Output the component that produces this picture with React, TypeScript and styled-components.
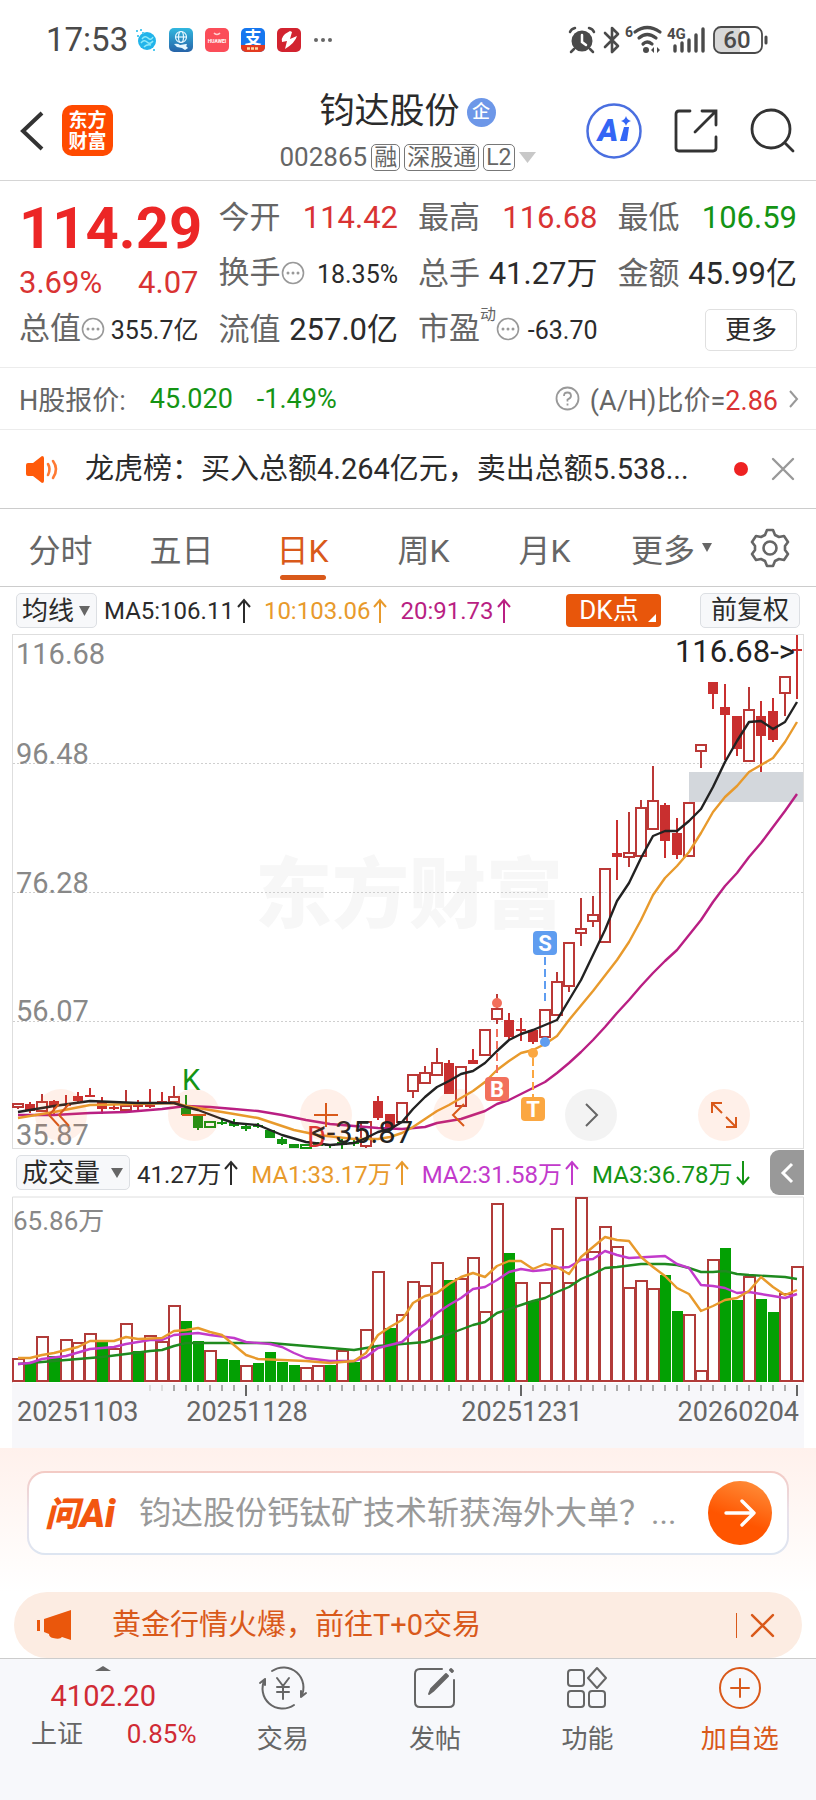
import React from "react";
import styled, { createGlobalStyle } from "styled-components";

const RED = "#d93333";
const GREEN = "#149414";
const ORANGE = "#d9591a";
const AMBER = "#e89a2c";
const MAGENTA = "#b91f83";
const PURPLE = "#c23acb";
const GREY = "#666666";
const INK = "#2b2b2b";
const FONT = `Roboto, "Noto Sans CJK SC", sans-serif`;

const GlobalStyle = createGlobalStyle`
  *, *::before, *::after { box-sizing: border-box; }
  body { margin: 0; background: #fff; color: ${INK}; font-family: ${FONT}; }
  button, input, select { font: inherit; color: inherit; }
  button { padding: 0; border: 0; background: none; cursor: pointer; }
  svg { display: block; flex: none; overflow: visible; }
  dl, dd, h1, p { margin: 0; }
  a { color: inherit; text-decoration: none; }
`;

const Page = styled.div`
  min-height: 100vh;
  display: flex;
  flex-direction: column;
  white-space: nowrap;
`;

/* ---------- status bar ---------- */

const StatusBar = styled.div`
  height: 80px;
  padding: 0 48px 0 46px;
  display: flex;
  align-items: center;
  justify-content: space-between;
  color: #4a4a4a;
`;

const StatusGroup = styled.div<{ $gap: number }>`
  display: flex;
  align-items: center;
  gap: ${(p) => p.$gap}px;
`;

const Clock = styled.time`
  font-size: 33px;
  line-height: 40px;
  margin-right: -5px;
`;

/* ---------- header ---------- */

const Header = styled.header`
  display: grid;
  grid-template-columns: 1fr auto 1fr;
  align-items: center;
  padding: 10px 21px 9px 20px;
  border-bottom: 1px solid #d5d5d5;
`;

const HeaderSide = styled.div<{ $end?: boolean }>`
  display: flex;
  align-items: center;
  gap: ${(p) => (p.$end ? 32 : 17)}px;
  justify-content: ${(p) => (p.$end ? "flex-end" : "flex-start")};
`;

const Logo = styled.a`
  width: 51px;
  height: 51px;
  border-radius: 10px;
  background: #ff4a00;
  color: #fff;
  font-size: 19px;
  line-height: 21px;
  font-weight: 700;
  display: grid;
  place-content: center;
  text-align: center;
  white-space: pre-line;
`;

const TitleBlock = styled.div`
  display: flex;
  flex-direction: column;
  align-items: center;
  gap: 10px;
`;

const TitleRow = styled.div`
  display: flex;
  align-items: center;
  gap: 7px;
  h1 { font-size: 35px; line-height: 44px; font-weight: 400; }
`;

const CompanyBadge = styled.span`
  width: 29px;
  height: 29px;
  border-radius: 50%;
  background: #6d97e8;
  color: #fff;
  font-size: 18px;
  line-height: 28px;
  font-weight: 500;
  text-align: center;
`;

const CodeRow = styled.div`
  display: flex;
  align-items: center;
  gap: 4px;
  color: ${GREY};
  font-size: 26px;
  line-height: 27px;
`;

const Tag = styled.span`
  border: 1px solid #777;
  border-radius: 5px;
  padding: 0 2px;
  font-size: 23px;
  line-height: 25px;
`;

/* ---------- quote panel ---------- */

const Quote = styled.section`
  display: grid;
  grid-template-columns: repeat(4, minmax(0, 1fr));
  grid-template-rows: repeat(3, 56px);
  column-gap: 20px;
  padding: 9px 19px;
  border-bottom: 1px solid #ececec;
`;

const PriceBlock = styled.div`
  grid-row: span 2;
  padding-top: 2px;
  color: ${RED};
`;

const Price = styled.div`
  color: #ec2626;
  font-size: 58px;
  line-height: 72px;
  font-weight: 700;
`;

const Change = styled.div`
  display: flex;
  justify-content: space-between;
  font-size: 31px;
  line-height: 38px;
`;

const Stat = styled.dl`
  align-self: center;
  display: flex;
  align-items: baseline;
  justify-content: space-between;
  line-height: 44px;
  dt {
    display: flex;
    align-items: center;
    font-size: 31px;
    color: ${GREY};
  }
`;

const StatValue = styled.dd<{ $color?: string; $small?: boolean }>`
  font-size: ${(p) => (p.$small ? 25 : 31)}px;
  color: ${(p) => p.$color || INK};
`;

const Dynamic = styled.sup`
  align-self: flex-start;
  font-size: 16px;
  line-height: 16px;
`;

const MoreButton = styled.button`
  justify-self: end;
  align-self: center;
  width: 92px;
  height: 42px;
  border: 1px solid #e0e0e0;
  border-radius: 5px;
  font-size: 26px;
  line-height: 38px;
`;

/* ---------- H share and notice rows ---------- */

const HShare = styled.section`
  height: 62px;
  padding: 0 17px 0 19px;
  display: flex;
  align-items: center;
  font-size: 27px;
  color: ${GREY};
  border-bottom: 1px solid #ececec;
`;

const HValue = styled.span`
  color: ${GREEN};
  margin-left: 24px;
`;

const RatioLink = styled.a`
  margin-left: auto;
  display: flex;
  align-items: center;
  gap: 10px;
  b { font-weight: 400; color: ${RED}; }
`;

const Notice = styled.section`
  height: 79px;
  padding: 0 21px 0 26px;
  display: flex;
  align-items: center;
  border-bottom: 1px solid #ccc;
`;

const NoticeText = styled.p`
  flex: 1;
  min-width: 0;
  margin-left: 26px;
  overflow: hidden;
  text-overflow: ellipsis;
  font-size: 29px;
  line-height: 40px;
`;

const UnreadDot = styled.span`
  width: 14px;
  height: 14px;
  margin: 0 23px 0 20px;
  border-radius: 50%;
  background: #ee2222;
`;

/* ---------- period tabs ---------- */

const Tabs = styled.nav`
  height: 78px;
  padding-right: 14px;
  display: grid;
  grid-template-columns: repeat(5, 121fr) 133fr 64fr;
  border-bottom: 1px solid #ccc;
`;

const Tab = styled.button<{ $active?: boolean }>`
  position: relative;
  display: flex;
  align-items: center;
  justify-content: center;
  gap: 7px;
  font-size: 32px;
  color: ${(p) => (p.$active ? ORANGE : GREY)};
  &::after {
    content: "";
    display: ${(p) => (p.$active ? "block" : "none")};
    position: absolute;
    left: 50%;
    bottom: 6px;
    width: 46px;
    height: 5px;
    margin-left: -23px;
    border-radius: 3px;
    background: ${ORANGE};
  }
`;

/* ---------- indicator rows ---------- */

const IndicatorRow = styled.div<{ $padRight: number }>`
  height: 47px;
  padding: 0 ${(p) => p.$padRight}px 0 16px;
  display: flex;
  align-items: center;
  gap: 10px;
  font-size: 24px;
`;

const Picker = styled.label<{ $gap: number }>`
  height: 35px;
  margin-right: -3px;
  padding: 0 6px 0 5px;
  display: flex;
  align-items: center;
  gap: ${(p) => p.$gap}px;
  border: 1px solid #dcdfe3;
  border-radius: 5px;
  background: #f7f8fa;
  select {
    appearance: none;
    border: 0;
    padding: 0;
    background: none;
    font-size: 26px;
    line-height: 32px;
  }
  svg { pointer-events: none; }
`;

const Reading = styled.span<{ $color?: string }>`
  display: flex;
  align-items: center;
  color: ${(p) => p.$color || INK};
`;

const DkButton = styled.button`
  position: relative;
  width: 95px;
  height: 33px;
  margin-left: auto;
  padding-right: 9px;
  border-radius: 4px;
  background: #e8560b;
  color: #fff;
  font-size: 26px;
  line-height: 31px;
  &::after {
    content: "";
    position: absolute;
    right: 5px;
    bottom: 5px;
    border: 4px solid transparent;
    border-right-color: #fff;
    border-bottom-color: #fff;
  }
`;

const AdjustButton = styled.button`
  width: 100px;
  height: 35px;
  margin-left: 29px;
  border: 1px solid #dcdfe3;
  border-radius: 5px;
  background: #f7f8fa;
  font-size: 26px;
  line-height: 31px;
`;

const CollapseButton = styled.button`
  width: 34px;
  height: 45px;
  margin-left: auto;
  border-radius: 9px 0 0 9px;
  background: #999;
  display: grid;
  place-items: center;
`;

/* ---------- charts ---------- */

const ChartArea = styled.div`
  position: relative;
  margin: 0 12px;
  svg { font-family: ${FONT}; }
`;

const ChartSvg = styled.svg`
  width: 100%;
  height: auto;
`;

const ChartTools = styled.div`
  position: absolute;
  left: 23px;
  right: 54px;
  bottom: 8px;
  display: flex;
  justify-content: space-between;
`;

const ChartTool = styled.button<{ $muted?: boolean }>`
  width: 52px;
  height: 52px;
  border-radius: 50%;
  background: ${(p) => (p.$muted ? "rgba(120,120,120,.09)" : "rgba(255,110,40,.1)")};
  color: ${(p) => (p.$muted ? GREY : ORANGE)};
  display: grid;
  place-items: center;
`;

/* ---------- ask and promo ---------- */

const AskSection = styled.section`
  padding: 23px 27px 37px;
  background: linear-gradient(#fff1ec, #fff);
`;

const AskBox = styled.form`
  height: 84px;
  padding: 0 15px 0 16px;
  display: flex;
  align-items: center;
  border: 2px solid transparent;
  border-radius: 18px;
  background: linear-gradient(#fff, #fff) padding-box, linear-gradient(#f3cac4, #e9e1ea 50%, #dde5f1) border-box;
`;

const AskInput = styled.input`
  flex: 1;
  min-width: 0;
  margin: 0 14px 0 18px;
  padding: 0;
  border: 0;
  outline: 0;
  background: none;
  font-size: 32px;
  line-height: 44px;
  text-overflow: ellipsis;
  &::placeholder { color: #999; opacity: 1; }
`;

const SendButton = styled.button`
  width: 64px;
  height: 64px;
  border-radius: 50%;
  background: linear-gradient(200deg, #ff9440, #ff5500 60%);
  display: grid;
  place-items: center;
`;

const Promo = styled.section`
  height: 66px;
  margin: 0 14px;
  padding: 0 27px 0 22px;
  display: flex;
  align-items: center;
  border-radius: 33px;
  background: #fcece2;
  color: ${ORANGE};
  a { flex: 1; margin-left: 40px; font-size: 29px; line-height: 40px; }
  button { padding-left: 13px; border-left: 1px solid ${ORANGE}; }
`;

/* ---------- bottom bar ---------- */

const BottomBar = styled.nav`
  flex: 1;
  display: grid;
  grid-template-columns: 206fr repeat(4, 152fr);
  align-items: start;
  padding: 7px 0 36px;
  border-top: 1px solid #ccc;
  background: #f7f8fb;
`;

const IndexLink = styled.a`
  display: flex;
  flex-direction: column;
  align-items: center;
  color: #d02b35;
  font-size: 29px;
  line-height: 38px;
  svg { margin-bottom: 6px; }
`;

const IndexRow = styled.span`
  align-self: stretch;
  display: flex;
  justify-content: space-between;
  padding: 0 10px 0 31px;
  font-size: 26px;
  span { color: ${GREY}; }
`;

const BarButton = styled.button<{ $accent?: boolean }>`
  display: flex;
  flex-direction: column;
  align-items: center;
  gap: 10px;
  color: ${(p) => (p.$accent ? ORANGE : GREY)};
  font-size: 26px;
  line-height: 38px;
`;

/* ---------- data ---------- */

type Kind = "up" | "down" | "fall" | "fallHollow";
/* [kind, high, top, bottom, low] in chart units */
const CANDLES: [Kind, number, number, number, number][] = [
  ["up", 469, 470, 473, 475], ["down", 468, 470, 477, 479], ["up", 460, 468, 477, 477], ["down", 466, 467, 472, 480],
  ["down", 461, 470, 472, 473], ["down", 458, 462, 467, 468], ["down", 454, 461, 463, 463], ["down", 463, 467, 475, 480],
  ["down", 471, 473, 475, 476], ["up", 456, 472, 476, 476], ["down", 466, 471, 473, 478], ["down", 455, 471, 473, 474],
  ["down", 458, 467, 469, 469], ["up", 452, 463, 468, 468], ["fall", 461, 474, 481, 482], ["fall", 481, 481, 494, 496],
  ["fallHollow", 487, 488, 493, 494], ["fall", 484, 488, 490, 491], ["fall", 485, 489, 492, 493], ["fall", 491, 492, 495, 497],
  ["fall", 489, 491, 493, 494], ["fall", 496, 496, 504, 504], ["fall", 503, 505, 510, 511], ["fall", 510, 510, 514, 514],
  ["fallHollow", 510, 511, 514, 515], ["fall", 508, 510, 512, 512], ["fall", 510, 510, 512, 514], ["fall", 505, 508, 511, 515],
  ["fall", 506, 508, 510, 512], ["up", 487, 488, 512, 514], ["down", 462, 467, 484, 486], ["down", 480, 480, 494, 494],
  ["up", 468, 469, 488, 488], ["up", 440, 441, 457, 464], ["up", 432, 439, 449, 449], ["up", 414, 429, 441, 442],
  ["down", 426, 429, 460, 460], ["up", 432, 433, 472, 472], ["down", 415, 426, 430, 430], ["up", 395, 396, 421, 421],
  ["up", 360, 375, 385, 390], ["down", 379, 386, 403, 405], ["down", 384, 395, 397, 407], ["down", 396, 396, 408, 410],
  ["up", 375, 376, 403, 404], ["up", 338, 348, 381, 381], ["up", 308, 309, 352, 358], ["up", 264, 295, 299, 312],
  ["up", 262, 281, 287, 293], ["up", 234, 235, 308, 308], ["down", 186, 219, 223, 246], ["up", 178, 219, 223, 233],
  ["up", 166, 174, 222, 222], ["up", 132, 167, 195, 196], ["down", 169, 171, 207, 224], ["down", 184, 199, 221, 225],
  ["up", 168, 169, 222, 222], ["up", 110, 111, 117, 134], ["down", 48, 48, 60, 75], ["down", 50, 73, 81, 126],
  ["down", 82, 82, 115, 122], ["up", 53, 76, 127, 128], ["down", 67, 82, 102, 138], ["down", 64, 77, 106, 108],
  ["up", 42, 43, 59, 82], ["down", 1, 15, 17, 65],
];

/* tops of the volume bars, negative for a falling day */
const VOLUMES = [
  162, -167, 140, -160, 143, 146, 137, -145, 152, 127, -155, 139, 145, 109, -125, -145, 154, -163, -164, 169, -167, -156,
  -166, -169, 171, 169, -169, 154, -166, 133, 75, -132, 118, 85, 89, 66, -84, 82, 61, 115, 7, -57, 86, -105, 86, 32, 86,
  1, 55, 30, 50, 91, 84, 92, -79, -115, 118, 174, 63, -52, -104, 80, -103, -116, 97, 70,
];

type Line = [number, number][];
const MA5: Line = [[0, 478], [3, 472], [6, 467], [10, 469], [13, 469], [14, 473], [15, 476], [17, 485], [18, 489], [20, 491], [22, 501], [24, 508], [26, 511], [28, 509], [29, 504], [30, 498], [31, 495], [32, 488], [33, 475], [34, 463], [35, 453], [36, 447], [37, 440], [38, 437], [39, 429], [40, 417], [41, 406], [42, 400], [43, 396], [44, 391], [45, 386], [46, 366], [47, 346], [48, 321], [49, 296], [50, 267], [51, 249], [52, 224], [53, 202], [54, 197], [55, 197], [56, 187], [57, 175], [58, 153], [59, 128], [60, 107], [61, 88], [62, 87], [63, 95], [64, 88], [65, 68]];
const MA10: Line = [[0, 484], [3, 478], [6, 471], [10, 470], [13, 469], [14, 472], [16, 476], [18, 480], [20, 484], [23, 496], [25, 501], [28, 505], [30, 505], [31, 503], [32, 499], [33, 493], [35, 477], [36, 471], [37, 464], [38, 457], [39, 448], [40, 436], [41, 427], [42, 419], [43, 416], [44, 410], [45, 402], [46, 386], [48, 357], [50, 326], [51, 308], [52, 286], [53, 261], [54, 244], [55, 232], [56, 218], [57, 199], [58, 178], [59, 163], [60, 152], [61, 138], [62, 131], [63, 124], [64, 108], [65, 88]];
const MA20: Line = [[0, 481], [3, 481], [6, 479], [9, 478], [12, 475], [14, 472], [16, 473], [18, 475], [20, 477], [22, 481], [24, 486], [26, 490], [28, 492], [30, 494], [32, 495], [34, 493], [35, 489], [37, 485], [39, 477], [40, 470], [41, 466], [43, 454], [44, 448], [45, 439], [46, 429], [47, 418], [48, 406], [49, 393], [50, 379], [51, 366], [52, 352], [53, 339], [54, 327], [55, 316], [56, 301], [57, 286], [58, 268], [59, 252], [60, 239], [61, 223], [62, 209], [63, 193], [64, 177], [65, 160]];
const VMA1: Line = [[0, 162], [1, 162], [2, 159], [3, 157], [4, 154], [5, 151], [6, 145], [8, 145], [9, 141], [10, 143], [12, 142], [13, 135], [14, 134], [15, 132], [16, 136], [17, 139], [18, 149], [19, 159], [20, 163], [22, 164], [24, 165], [26, 167], [28, 165], [29, 157], [30, 139], [31, 131], [32, 124], [33, 107], [34, 100], [35, 97], [36, 88], [37, 81], [38, 77], [39, 81], [40, 70], [41, 65], [42, 65], [43, 73], [44, 68], [45, 71], [46, 78], [47, 61], [48, 51], [49, 41], [50, 44], [51, 45], [52, 61], [53, 71], [54, 80], [55, 92], [56, 98], [57, 115], [58, 110], [59, 104], [60, 102], [61, 95], [62, 81], [63, 91], [64, 99], [65, 94]];
const VMA2: Line = [[0, 168], [1, 167], [2, 163], [4, 160], [6, 153], [8, 151], [9, 148], [11, 144], [12, 144], [13, 139], [15, 137], [16, 139], [18, 142], [19, 146], [21, 148], [22, 151], [23, 157], [24, 162], [26, 165], [28, 165], [29, 161], [30, 152], [32, 146], [33, 136], [34, 128], [35, 117], [36, 109], [37, 102], [38, 93], [39, 91], [40, 84], [41, 76], [42, 73], [43, 75], [44, 74], [45, 72], [46, 71], [47, 64], [48, 63], [49, 55], [50, 59], [51, 62], [54, 60], [55, 68], [56, 72], [57, 89], [58, 90], [59, 92], [60, 97], [61, 96], [62, 98], [63, 100], [64, 102], [65, 98]];
const VMA3: Line = [[0, 168], [3, 165], [5, 163], [7, 161], [9, 158], [11, 155], [12, 154], [13, 150], [14, 147], [18, 147], [21, 147], [23, 149], [26, 152], [28, 154], [30, 150], [32, 148], [34, 146], [36, 138], [38, 129], [39, 126], [40, 117], [42, 109], [43, 105], [44, 102], [45, 96], [46, 91], [47, 83], [48, 78], [49, 72], [50, 71], [52, 68], [54, 68], [55, 69], [56, 72], [57, 76], [58, 76], [59, 75], [60, 78], [61, 79], [64, 81], [65, 83]];

const cx = (i: number) => 6 + i * 12 - (i > 32 ? 1 : 0);
const points = (line: Line) => line.map(([i, y]) => `${cx(i)},${y}`).join(" ");

const AXIS: [string, number][] = [["116.68", 30], ["96.48", 130], ["76.28", 259], ["56.07", 387], ["35.87", 511]];
const SIGNALS = [
  { name: "B", day: 40, y: 443, color: "#f2705c", dot: 369, from: 395, to: 443 },
  { name: "T", day: 43, y: 463, color: "#fba741", dot: 419, from: 424, to: 463 },
  { name: "S", day: 44, y: 297, color: "#5f9df0", dot: 408, from: 323, to: 368 },
];

function Candle({ day, data }: { day: number; data: (typeof CANDLES)[number] }) {
  const [kind, high, top, bottom, low] = data;
  const x = cx(day);
  const falling = kind === "fall" || kind === "fallHollow";
  const hollow = kind === "up" || kind === "fallHollow";
  const color = falling ? "#129412" : hollow ? "#bb3836" : "#c92f2f";
  return (
    <g stroke={color} strokeWidth="2">
      <path d={`M${x} ${high}V${top}M${x} ${bottom}V${low}`} />
      {hollow ? (
        <rect x={x - 5} y={top} width="10" height={Math.max(bottom - top, 2)} fill="none" />
      ) : (
        <rect x={x - 5} y={top} width="10" height={bottom - top} fill={color} stroke="none" />
      )}
    </g>
  );
}

function PriceChart() {
  return (
    <ChartSvg viewBox="0 0 792 515" role="img" aria-label="日K线图">
      <text x="243" y="288" fontSize="77" fontWeight="900" fill="#f7f7f7">东方财富</text>
      <rect x="677" y="138" width="114" height="30" fill="#d3d7dc" />
      <g stroke="#cfcfcf" strokeDasharray="2 2">
        <path d="M1 129.5H791M1 258.5H791M1 387.5H791" />
      </g>
      <rect x="0.5" y="0.5" width="791" height="514" fill="none" stroke="#dedede" />
      <g fontSize="29" fill="#888">
        {AXIS.map(([label, y]) => <text key={label} x="4" y={y}>{label}</text>)}
      </g>
      {CANDLES.map((c, i) => <Candle key={i} day={i} data={c} />)}
      <g fill="none" strokeWidth="2.4" strokeLinejoin="round">
        <polyline points={points(MA20)} stroke={MAGENTA} />
        <polyline points={points(MA10)} stroke={AMBER} />
        <polyline points={points(MA5)} stroke="#222" />
      </g>
      <text x="170" y="456" fontSize="29" fill={GREEN}>K</text>
      <text x="295" y="513" fontSize="29" fill={RED}>D</text>
      <g fontSize="31" fill="#222">
        <text x="783" y="28" textAnchor="end">116.68-&gt;</text>
        <text x="299" y="509">&lt;-35.87</text>
      </g>
      {SIGNALS.map((s) => (
        <g key={s.name}>
          <path d={`M${cx(s.day)} ${s.from}V${s.to}`} stroke={s.color} strokeWidth="2" strokeDasharray="8 4" />
          <circle cx={cx(s.day)} cy={s.dot} r="5" fill={s.color} />
          <rect x={cx(s.day) - 12} y={s.y} width="24" height="24" rx="4" fill={s.color} />
          <text x={cx(s.day)} y={s.y + 20} fontSize="22" fontWeight="700" fill="#fff" textAnchor="middle">{s.name}</text>
        </g>
      ))}
    </ChartSvg>
  );
}

function VolumeChart() {
  return (
    <ChartSvg viewBox="0 0 792 187" role="img" aria-label="成交量图">
      <path d="M0.5 187V1H791.5V187" fill="none" stroke="#dedede" />
      <text x="1" y="34" fontSize="26" fill="#888">65.86万</text>
      {VOLUMES.map((v, i) =>
        v < 0 ? (
          <rect key={i} x={cx(i) - 5} y={-v} width="11" height={186 + v} fill="#03a003" />
        ) : (
          <rect key={i} x={cx(i) - 5} y={v + 1} width="11" height={184 - v} fill="#fff" stroke="#b13b39" strokeWidth="2" />
        )
      )}
      <g fill="none" strokeWidth="2.4" strokeLinejoin="round">
        <polyline points={points(VMA3)} stroke="#1f8a1f" />
        <polyline points={points(VMA2)} stroke={PURPLE} />
        <polyline points={points(VMA1)} stroke={AMBER} />
      </g>
    </ChartSvg>
  );
}

function DateAxis() {
  const days = Array.from({ length: 55 }, (_, k) => k + 11);
  const major = [19, 42, 65];
  return (
    <ChartSvg viewBox="0 0 792 65" role="img" aria-label="日期">
      <rect width="792" height="65" fill="#f7f7fa" />
      {days.map((d) => (
        <path
          key={d}
          d={`M${cx(d)} 2V${major.includes(d) ? 13 : 8}`}
          stroke={major.includes(d) ? "#666" : d < 13 ? "#ddd" : "#aaa"}
          strokeWidth="2"
        />
      ))}
      <g fontSize="27" fill={GREY}>
        <text x="5" y="38">20251103</text>
        <text x="235" y="38" textAnchor="middle">20251128</text>
        <text x="510" y="38" textAnchor="middle">20251231</text>
        <text x="787" y="38" textAnchor="end">20260204</text>
      </g>
    </ChartSvg>
  );
}

/* ---------- small drawings ---------- */

const Triangle = ({ w = 10, h = 10, color = GREY }: { w?: number; h?: number; color?: string }) => (
  <svg width={w} height={h} viewBox="0 0 10 10" preserveAspectRatio="none" aria-hidden="true">
    <path d="M0 0H10L5 10Z" fill={color} />
  </svg>
);

const Cross = ({ size, color }: { size: number; color: string }) => (
  <svg width={size} height={size} viewBox="0 0 24 24" stroke={color} strokeWidth="2.4" strokeLinecap="round" aria-hidden="true">
    <path d="M2 2L22 22M22 2L2 22" />
  </svg>
);

const Dots = () => (
  <svg width="24" height="24" viewBox="0 0 24 24" fill="none" stroke="#999" strokeWidth="1.6" aria-hidden="true">
    <circle cx="12" cy="12" r="10.5" />
    <g fill="#999" stroke="none">
      <circle cx="7" cy="12" r="1.5" /><circle cx="12" cy="12" r="1.5" /><circle cx="17" cy="12" r="1.5" />
    </g>
  </svg>
);

const Arrow = ({ down }: { down?: boolean }) => (
  <svg width="20" height="28" viewBox="0 0 20 28" fill="none" stroke="currentColor" strokeWidth="2" aria-hidden="true">
    <path d={down ? "M10 2V25M4 18L10 25L16 18" : "M10 26V3M4 10L10 3L16 10"} />
  </svg>
);

function AppIcons() {
  return (
    <>
      <svg width="22" height="24" viewBox="0 0 22 24" aria-hidden="true">
        <circle cx="12" cy="13" r="9" fill="#22b4ea" />
        <path d="M7 11q3-4 6-1t5-1M6 15q3-4 6-1t6-1M9 19q3-3 7-2" stroke="#8ee9fa" strokeWidth="1.5" fill="none" />
        <path d="M1 2h2v2H1zM5 1h2v2H5zM2 7h2v2H2zM7 4h2v2H7zM18 21h2v2h-2z" fill="#54caf0" />
      </svg>
      <svg width="24" height="24" viewBox="0 0 24 24" aria-hidden="true">
        <defs><linearGradient id="globe" x1="0" y1="0" x2="0" y2="1"><stop stopColor="#31b7df" /><stop offset="1" stopColor="#2763a8" /></linearGradient></defs>
        <rect width="24" height="24" rx="5" fill="url(#globe)" />
        <g fill="none" stroke="#e6f7ff" strokeWidth="1.2">
          <circle cx="12" cy="9" r="5.5" /><ellipse cx="12" cy="9" rx="2.5" ry="5.5" /><path d="M6.500 9H17.500" />
        </g>
        <path d="M5 16q4-1 6 1l6-1q2 0 0 2l2 2-3 2-3-2-5-1z" fill="#e6f7ff" />
      </svg>
      <svg width="24" height="24" viewBox="0 0 24 24" aria-hidden="true">
        <rect width="24" height="24" rx="5" fill="#fb4d59" />
        <path d="M9 5a3.500 3 0 0 0 6 0" stroke="#ffd0d0" strokeWidth="1.400" fill="none" />
        <text x="12" y="15" fontSize="5" fontWeight="700" fill="#fff" textAnchor="middle">HUAWEI</text>
      </svg>
      <svg width="24" height="24" viewBox="0 0 24 24" aria-hidden="true">
        <rect width="24" height="24" rx="5" fill="#1677ef" />
        <text x="12" y="16" fontSize="17" fontWeight="700" fill="#fff" textAnchor="middle">支</text>
        <path d="M0 17H24V19a5 5 0 0 1-5 5H5a5 5 0 0 1-5-5Z" fill="#e33a20" />
        <path d="M6 20.500H18" stroke="#ffd9a0" strokeWidth="2.500" strokeDasharray="3 1" />
      </svg>
      <svg width="24" height="24" viewBox="0 0 24 24" aria-hidden="true">
        <rect width="24" height="24" rx="5" fill="#d2232f" />
        <path d="M13 3Q3 8 5 14L10 13L8 21Q18 15 20 8L13 11L15 4Z" fill="#fff" />
      </svg>
      <svg width="20" height="6" viewBox="0 0 20 6" fill="#666" aria-hidden="true">
        <circle cx="3" cy="3" r="2" /><circle cx="10" cy="3" r="2" /><circle cx="17" cy="3" r="2" />
      </svg>
    </>
  );
}

function SystemIcons() {
  return (
    <svg width="200" height="32" viewBox="0 0 200 32" fill="none" stroke="#4a4a4a" strokeLinecap="round" aria-hidden="true">
      <circle cx="14" cy="17" r="10.500" fill="#4a4a4a" stroke="none" />
      <path d="M14 11V18L18 21" stroke="#fff" strokeWidth="2.500" />
      <path d="M2 8Q3 5 7 4M26 8Q25 5 21 4M6 25L3 28M22 25L25 28" strokeWidth="2.500" />
      <path d="M37 9L50 22L44 28V4L50 10L37 23" strokeWidth="2.600" strokeLinejoin="round" />
      <g fill="#4a4a4a" stroke="none" fontWeight="700">
        <text x="57" y="13" fontSize="14">6</text>
        <text x="99" y="15" fontSize="15">4G</text>
      </g>
      <path d="M67 8Q79 -1 92 8M71 14Q79 7 88 14M75 20Q79 16 84 20" strokeWidth="3.200" />
      <circle cx="78" cy="26" r="3" fill="#4a4a4a" stroke="none" />
      <path d="M86 23L83 26L86 29ZM89 23L92 26L89 29Z" fill="#4a4a4a" stroke="none" />
      <path d="M107 22V27M114 19V27M121 16V27M128 11V27M135 5V27" strokeWidth="3.400" />
      <path d="M152 4H172V28H152A6 6 0 0 1 146 22V10A6 6 0 0 1 152 4Z" fill="#d8d8d8" stroke="none" />
      <rect x="146" y="3" width="48" height="26" rx="7" strokeWidth="1.800" />
      <text x="169" y="24" fontSize="24" fontWeight="500" fill="#4a4a4a" stroke="none" textAnchor="middle">60</text>
      <path d="M198 13V19" strokeWidth="3" />
    </svg>
  );
}

const AiIcon = () => (
  <svg width="56" height="56" viewBox="0 0 56 56" aria-hidden="true">
    <circle cx="28" cy="28" r="26.500" fill="none" stroke="#4a6fe0" strokeWidth="2.500" />
    <text x="22" y="38" fontSize="31" fontWeight="900" fontStyle="italic" fill="#3366f5" textAnchor="middle">A</text>
    <path d="M38 24H43L41 38H34Z" fill="#3366f5" />
    <path d="M40 13Q41 17 45 18Q41 19 40 23Q39 19 35 18Q39 17 40 13Z" fill="#3366f5" />
  </svg>
);

const ShareIcon = () => (
  <svg width="44" height="44" viewBox="0 0 44 44" fill="none" stroke="#333" strokeWidth="2.800" strokeLinecap="round" aria-hidden="true">
    <path d="M16 2H5Q2 2 2 5V39Q2 42 5 42H39Q42 42 42 39V28M28 2H42V16M41 3L21 23" />
  </svg>
);

const SearchIcon = () => (
  <svg width="45" height="45" viewBox="0 0 45 45" fill="none" stroke="#333" strokeWidth="2.800" strokeLinecap="round" aria-hidden="true">
    <circle cx="21" cy="21" r="19" /><path d="M35 35L43 43" />
  </svg>
);

const GearIcon = () => (
  <svg width="40" height="40" viewBox="0 0 40 40" fill="none" stroke={GREY} strokeWidth="2.600" strokeLinejoin="round" aria-hidden="true">
    <path d="M17 2H23L25 7L29 9L34 8L38 14L35 18V22L38 26L34 32L29 31L25 33L23 38H17L15 33L11 31L6 32L2 26L5 22V18L2 14L6 8L11 9L15 7Z" />
    <circle cx="20" cy="20" r="6.500" />
  </svg>
);

const ToolIcon = ({ d }: { d: string }) => (
  <svg width="32" height="32" viewBox="0 0 32 32" fill="none" stroke="currentColor" strokeWidth="2" aria-hidden="true">
    <path d={d} />
  </svg>
);

const TOOLS: { label: string; d: string; muted?: boolean }[] = [
  { label: "快速后退", d: "M14 5L4 16L14 27M24 5L14 16L24 27" },
  { label: "缩小", d: "M4 16H28" },
  { label: "放大", d: "M4 16H28M16 4V28" },
  { label: "后退", d: "M21 5L10 16L21 27" },
  { label: "前进", d: "M11 5L22 16L11 27", muted: true },
  { label: "全屏", d: "M4 14V4H14M4 4L14 14M28 18V28H18M28 28L18 18" },
];

const BarIcon = ({ children }: { children: React.ReactNode }) => (
  <svg width="48" height="44" viewBox="0 0 48 44" fill="none" stroke="currentColor" strokeWidth="2" strokeLinecap="round" strokeLinejoin="round" aria-hidden="true">
    {children}
  </svg>
);

/* ---------- page ---------- */

export default function App() {
  return (
    <Page lang="zh-CN">
      <GlobalStyle />

      <StatusBar>
        <StatusGroup $gap={12}>
          <Clock>17:53</Clock>
          <AppIcons />
        </StatusGroup>
        <SystemIcons />
      </StatusBar>

      <Header>
        <HeaderSide>
          <button aria-label="返回">
            <svg width="25" height="42" viewBox="0 0 25 42" fill="none" stroke="#333" strokeWidth="4" aria-hidden="true">
              <path d="M22 3L3 21L22 39" />
            </svg>
          </button>
          <Logo href="#home">{"东方\n财富"}</Logo>
        </HeaderSide>
        <TitleBlock>
          <TitleRow>
            <h1>钧达股份</h1>
            <CompanyBadge>企</CompanyBadge>
          </TitleRow>
          <CodeRow>
            <span>002865</span>
            <Tag>融</Tag>
            <Tag>深股通</Tag>
            <Tag>L2</Tag>
            <Triangle w={17} h={11} color="#c8c8c8" />
          </CodeRow>
        </TitleBlock>
        <HeaderSide $end>
          <button aria-label="Ai"><AiIcon /></button>
          <button aria-label="分享"><ShareIcon /></button>
          <button aria-label="搜索"><SearchIcon /></button>
        </HeaderSide>
      </Header>

      <Quote>
        <PriceBlock>
          <Price>114.29</Price>
          <Change><span>3.69%</span><span>4.07</span></Change>
        </PriceBlock>
        <Stat><dt>今开</dt><StatValue $color={RED}>114.42</StatValue></Stat>
        <Stat><dt>最高</dt><StatValue $color={RED}>116.68</StatValue></Stat>
        <Stat><dt>最低</dt><StatValue $color={GREEN}>106.59</StatValue></Stat>
        <Stat><dt>换手<Dots /></dt><StatValue $small>18.35%</StatValue></Stat>
        <Stat><dt>总手</dt><StatValue>41.27万</StatValue></Stat>
        <Stat><dt>金额</dt><StatValue>45.99亿</StatValue></Stat>
        <Stat><dt>总值<Dots /></dt><StatValue $small>355.7亿</StatValue></Stat>
        <Stat><dt>流值</dt><StatValue>257.0亿</StatValue></Stat>
        <Stat><dt>市盈<Dynamic>动</Dynamic><Dots /></dt><StatValue $small>-63.70</StatValue></Stat>
        <MoreButton>更多</MoreButton>
      </Quote>

      <HShare>
        <span>H股报价:</span>
        <HValue>45.020</HValue>
        <HValue>-1.49%</HValue>
        <RatioLink href="#ratio">
          <svg width="25" height="25" viewBox="0 0 25 25" fill="none" stroke="#999" strokeWidth="1.800" aria-hidden="true">
            <circle cx="12.500" cy="12.500" r="11" />
            <path d="M9 10Q9 6.500 12.500 6.500T16 10Q16 12 12.500 13.500V15.500M12.500 17.500V19.500" />
          </svg>
          <span>(A/H)比价=<b>2.86</b></span>
          <svg width="11" height="18" viewBox="0 0 11 18" fill="none" stroke="#999" strokeWidth="2" aria-hidden="true">
            <path d="M2 1L9 9L2 17" />
          </svg>
        </RatioLink>
      </HShare>

      <Notice>
        <svg width="33" height="27" viewBox="0 0 33 27" aria-hidden="true">
          <path d="M2 7H7L16 0Q18 0 18 2V25Q18 27 16 27L7 20H2Q0 20 0 18V9Q0 7 2 7Z" fill="#ff5a0a" />
          <path d="M22 8Q25 13 22 19M27 5Q33 13 27 22" fill="none" stroke="#ff7a33" strokeWidth="2.600" strokeLinecap="round" />
        </svg>
        <NoticeText>龙虎榜：买入总额4.264亿元，卖出总额5.538...</NoticeText>
        <UnreadDot />
        <button aria-label="关闭"><Cross size={24} color="#999" /></button>
      </Notice>

      <Tabs>
        <Tab>分时</Tab>
        <Tab>五日</Tab>
        <Tab $active aria-current="true">日K</Tab>
        <Tab>周K</Tab>
        <Tab>月K</Tab>
        <Tab>更多<Triangle w={10} h={9} /></Tab>
        <Tab aria-label="设置"><GearIcon /></Tab>
      </Tabs>

      <IndicatorRow $padRight={16}>
        <Picker $gap={4}>
          <select aria-label="主图指标"><option>均线</option></select>
          <Triangle w={11} h={10} />
        </Picker>
        <Reading>MA5:106.11<Arrow /></Reading>
        <Reading $color={AMBER}>10:103.06<Arrow /></Reading>
        <Reading $color={MAGENTA}>20:91.73<Arrow /></Reading>
        <DkButton>DK点</DkButton>
        <AdjustButton>前复权</AdjustButton>
      </IndicatorRow>

      <ChartArea>
        <PriceChart />
        <ChartTools>
          {TOOLS.map((t) => (
            <ChartTool key={t.label} aria-label={t.label} $muted={t.muted}><ToolIcon d={t.d} /></ChartTool>
          ))}
        </ChartTools>
      </ChartArea>

      <IndicatorRow $padRight={12}>
        <Picker $gap={10}>
          <select aria-label="副图指标"><option>成交量</option></select>
          <Triangle w={12} h={10} />
        </Picker>
        <Reading>41.27万<Arrow /></Reading>
        <Reading $color={AMBER}>MA1:33.17万<Arrow /></Reading>
        <Reading $color={PURPLE}>MA2:31.58万<Arrow /></Reading>
        <Reading $color={GREEN}>MA3:36.78万<Arrow down /></Reading>
        <CollapseButton aria-label="收起">
          <svg width="14" height="22" viewBox="0 0 14 22" fill="none" stroke="#fff" strokeWidth="3" aria-hidden="true">
            <path d="M12 2L3 11L12 20" />
          </svg>
        </CollapseButton>
      </IndicatorRow>

      <ChartArea>
        <VolumeChart />
        <DateAxis />
      </ChartArea>

      <AskSection>
        <AskBox>
          <svg width="76" height="36" viewBox="0 0 76 36" fill="#f2560f" fontWeight="900" fontStyle="italic" aria-hidden="true">
            <text x="0" y="31" fontSize="34">问</text>
            <text x="35" y="32" fontSize="38">Ai</text>
          </svg>
          <AskInput aria-label="问Ai" placeholder="钧达股份钙钛矿技术斩获海外大单？..." />
          <SendButton type="button" aria-label="发送">
            <svg width="32" height="30" viewBox="0 0 32 30" fill="none" stroke="#fff" strokeWidth="3.400" strokeLinecap="round" strokeLinejoin="round" aria-hidden="true">
              <path d="M2 15H30M18 3L30 15L18 27" />
            </svg>
          </SendButton>
        </AskBox>
      </AskSection>

      <Promo>
        <svg width="36" height="30" viewBox="0 0 36 30" fill="#ea570c" aria-hidden="true">
          <path d="M1 10H4V21H1ZM8 9L35 0V30L26 27Q24 30 17 28Q13 27 13 24L8 22Z" />
        </svg>
        <a href="#gold">黄金行情火爆，前往T+0交易</a>
        <button aria-label="关闭"><Cross size={25} color={ORANGE} /></button>
      </Promo>

      <BottomBar>
        <IndexLink href="#index">
          <svg width="16" height="5" viewBox="0 0 16 5" aria-hidden="true"><path d="M0 5L8 0L16 5Z" fill={GREY} /></svg>
          4102.20
          <IndexRow><span>上证</span>0.85%</IndexRow>
        </IndexLink>
        <BarButton>
          <BarIcon>
            <path d="M13 5A20 20 0 0 1 42 31M42 31V25M42 31L47 27M35 39A20 20 0 0 1 6 13M6 13V19M6 13L1 17" />
            <path d="M18 12L24 20L30 12M24 20V33M18 21H30M18 26H30" />
          </BarIcon>
          交易
        </BarButton>
        <BarButton>
          <BarIcon>
            <path d="M31 3H9Q4 3 4 8V36Q4 41 9 41H38Q43 41 43 36V14" />
            <path d="M18 28L20 23L35 8L37 10L22 25ZM39 4L40 3L42 5L41 6Z" fill="currentColor" />
          </BarIcon>
          发帖
        </BarButton>
        <BarButton>
          <BarIcon>
            <rect x="5" y="4" width="16" height="16" rx="3" />
            <rect x="5" y="25" width="16" height="16" rx="3" />
            <rect x="26" y="25" width="16" height="16" rx="3" />
            <path d="M34 2L43 12L34 22L25 12Z" />
          </BarIcon>
          功能
        </BarButton>
        <BarButton $accent>
          <BarIcon>
            <circle cx="24" cy="22" r="20" />
            <path d="M24 13V31M15 22H33" />
          </BarIcon>
          加自选
        </BarButton>
      </BottomBar>
    </Page>
  );
}
